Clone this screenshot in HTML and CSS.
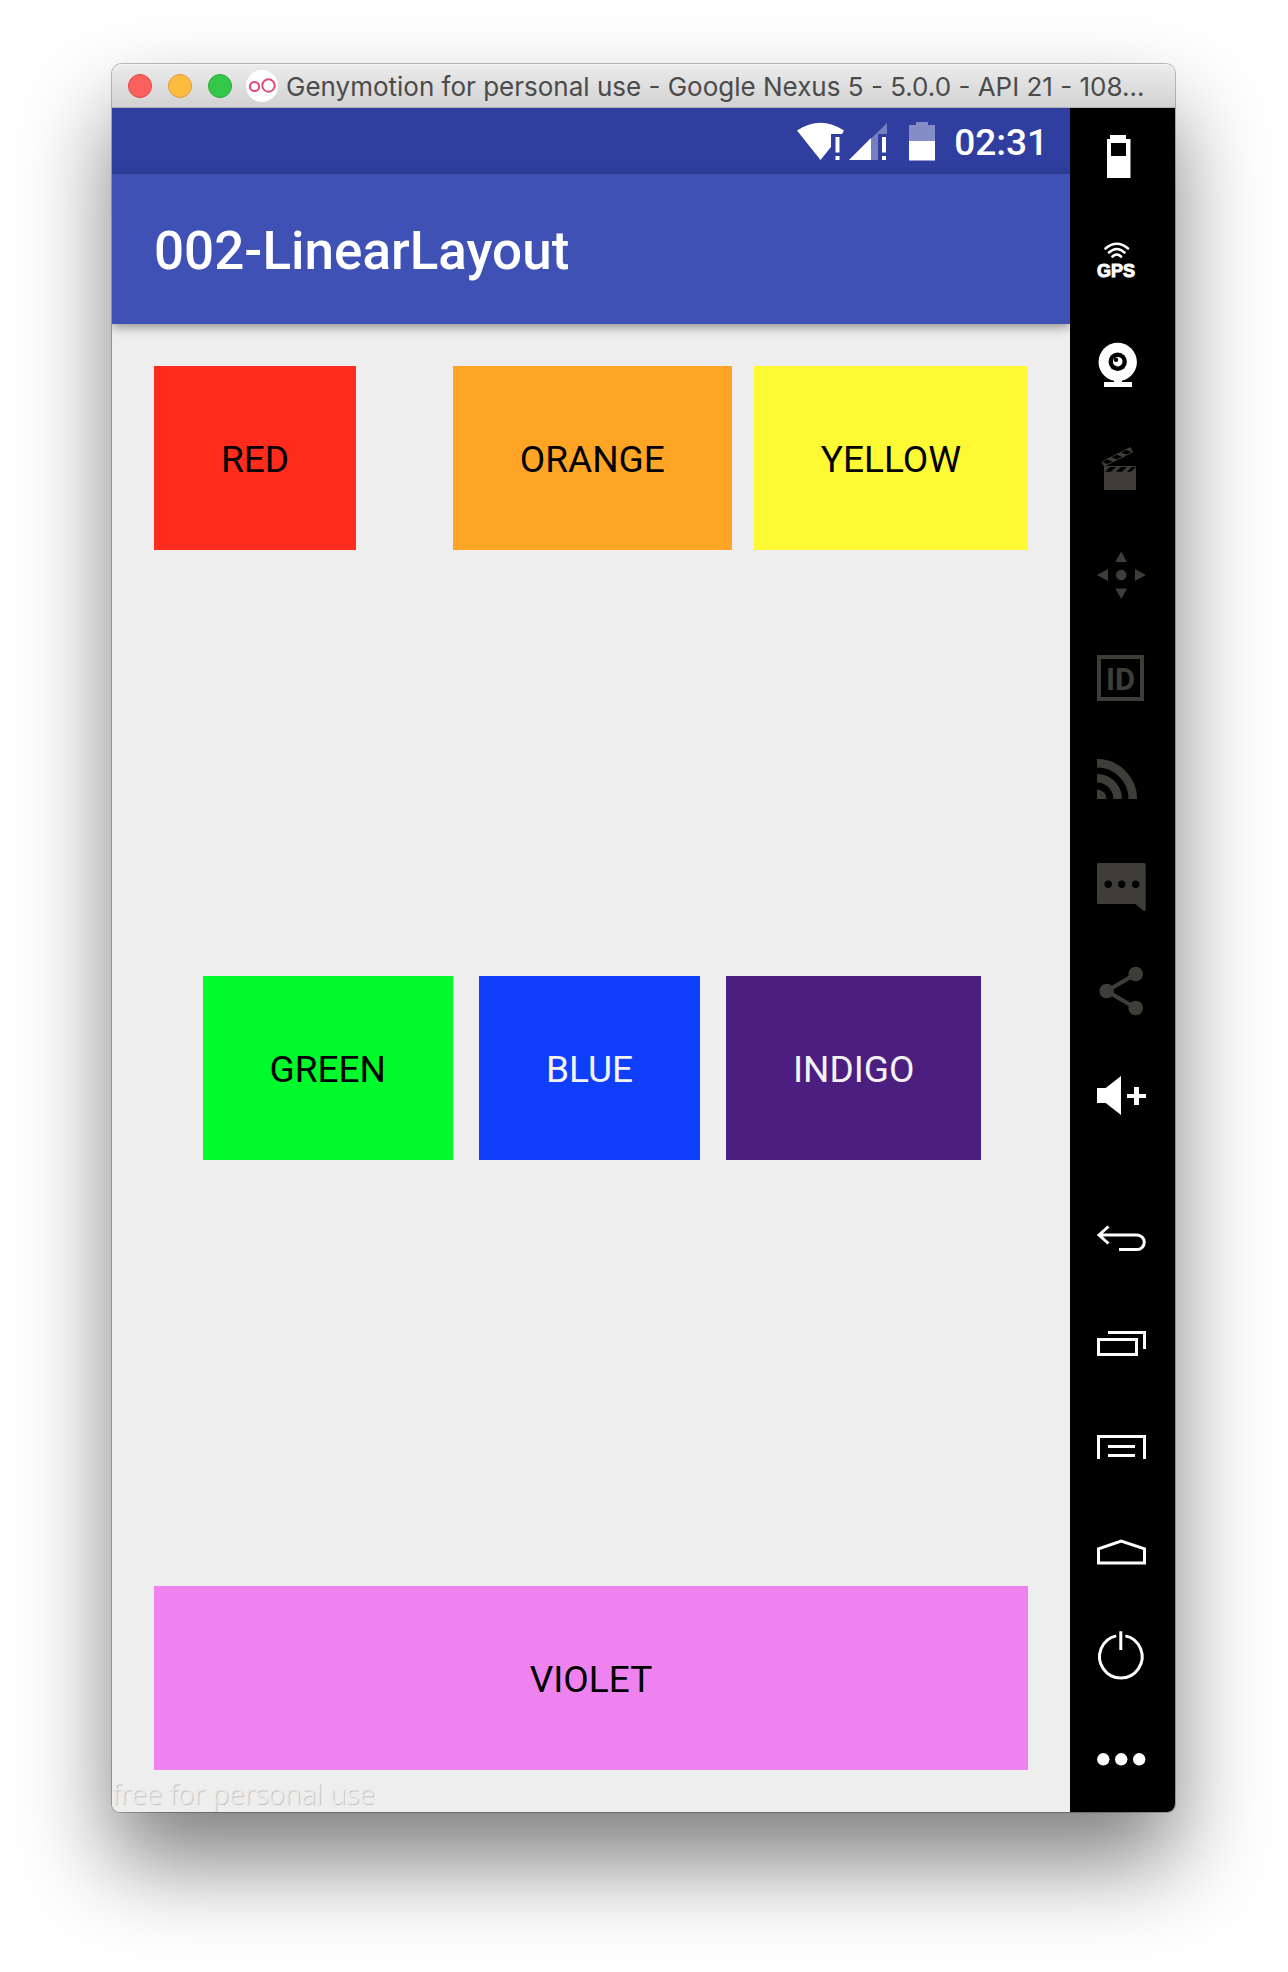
FILE: index.html
```html
<!DOCTYPE html>
<html lang="en">
<head>
<meta charset="utf-8">
<meta name="viewport" content="width=device-width, initial-scale=1">
<title>Genymotion - 002-LinearLayout</title>
<link rel="stylesheet" href="styles.css">
</head>
<body>
<div class="window">
  <header class="titlebar">
    <div class="lights">
      <button class="light close" type="button" aria-label="Close"></button>
      <button class="light minimize" type="button" aria-label="Minimize"></button>
      <button class="light zoom" type="button" aria-label="Zoom"></button>
    </div>
    <svg class="logo" viewBox="0 0 32 32" aria-hidden="true">
      <circle cx="16" cy="16" r="16" fill="#fff"/>
      <g fill="none" stroke="#e8447e" stroke-width="2"><circle cx="8.500" cy="16.500" r="4.600"/><circle cx="22.500" cy="15.500" r="6.200"/></g>
    </svg>
    <span class="window-title">Genymotion for personal use - Google Nexus 5 - 5.0.0 - API 21 - 108...</span>
  </header>
  <div class="emulator">
    <main class="screen">
      <div class="statusbar">
        <svg class="status-icons" viewBox="0 0 140 40" aria-hidden="true">
          <path fill="#fff" d="M1 9.500Q24.500-6 48 9.500L46 13H35V26L24.500 39Z"/>
          <path fill="#fff" d="M39.500 16h4v15.500h-4zM39.500 35h4v4h-4z"/>
          <path fill="#7580bf" d="M91 2V13H82V39H53Z"/>
          <path fill="#fff" d="M75 17V39H53ZM86 16h4v15.500h-4zM86 35h4v4h-4z"/>
          <path fill="#858dc6" d="M113 4h7V1h12v3h7v16h-26z"/>
          <path fill="#fff" d="M113 20h26v19.500h-26z"/>
        </svg>
        <time class="clock">02:31</time>
      </div>
      <div class="appbar"><h1 class="app-title">002-LinearLayout</h1></div>
      <div class="content">
        <div class="row row-top">
          <div class="tile red">RED</div>
          <div class="tile orange">ORANGE</div>
          <div class="tile yellow">YELLOW</div>
        </div>
        <div class="row row-middle">
          <div class="tile green">GREEN</div>
          <div class="tile blue">BLUE</div>
          <div class="tile indigo">INDIGO</div>
        </div>
        <div class="tile violet">VIOLET</div>
      </div>
      <span class="watermark">free for personal use</span>
    </main>
    <nav class="toolbar" aria-label="Device controls">
      <div class="tools">
        <button class="tool" type="button" aria-label="Battery"><svg viewBox="0 0 105 104"><path fill="currentColor" fill-rule="evenodd" d="M37 31h3v-4h16v4h4.500v39H37zM41 35v13h15V35z"/></svg></button>
        <button class="tool" type="button" aria-label="GPS"><svg viewBox="0 0 105 104"><g fill="none" stroke="currentColor" stroke-width="2.600" stroke-linecap="round"><path d="M35.500 36.500Q46.800 27 58 36.500M39 40.500Q46.800 33.500 54.500 40.500M42.500 44.500Q46.800 40.500 51 44.500"/></g><text class="gps" x="27" y="65">GPS</text></svg></button>
        <button class="tool" type="button" aria-label="Camera"><svg viewBox="0 0 105 104"><circle cx="47.700" cy="46" r="19.200" fill="currentColor"/><path fill="currentColor" d="M44 63h8v3h10v5H34v-5h10z"/><circle cx="47.700" cy="45.700" r="9.200" fill="#000"/><circle cx="47.700" cy="45.700" r="4.800" fill="currentColor"/><circle cx="46" cy="43.700" r="2.200" fill="#000"/></svg></button>
        <button class="tool off" type="button" aria-label="Screencast"><svg viewBox="0 0 105 104"><path fill="currentColor" d="M34 46h32v24H34zM31 41.700L60.300 27l3 5.200L34.300 46.500z"/><path fill="#000" d="M35 51.700l5-4.700h6l-5 4.700zM46 51.700l5-4.700h6l-5 4.700zM57 51.700l5-4.700h4l-5 4.700zM32 42l5-2.500 5.500 2-5 2.500zM41.500 37.200l5-2.500 5.500 2-5 2.500zM51 32.500l5-2.500 5.500 2-5 2.500z"/></svg></button>
        <button class="tool off" type="button" aria-label="Remote control"><svg viewBox="0 0 105 104"><g fill="currentColor"><circle cx="51.200" cy="51" r="5.300"/><path d="M51.200 27.500L57 38H45.300zM51.200 75L57 64.500H45.300zM27 51l11-6v12zM76 51l-11-6v12z"/></g></svg></button>
        <button class="tool off" type="button" aria-label="Identifiers"><svg viewBox="0 0 105 104"><rect x="29" y="29" width="43" height="42" fill="none" stroke="currentColor" stroke-width="4"/><text class="id" x="36" y="62">ID</text></svg></button>
        <button class="tool off" type="button" aria-label="Network"><svg viewBox="0 0 105 104"><path fill="currentColor" d="M27 57.500A9.700 9.700 0 0 1 36.700 67H27z"/><path fill="none" stroke="currentColor" stroke-width="8.600" d="M27 46.300A20.700 20.700 0 0 1 47.700 67M27 31.200A35.800 35.800 0 0 1 62.800 67"/></svg></button>
        <button class="tool off" type="button" aria-label="Phone"><svg viewBox="0 0 105 104"><path fill="currentColor" d="M28.500 27H74a1.700 1.700 0 0 1 1.700 1.700V74.700H73.500L65.300 68H28.500A1.500 1.500 0 0 1 27 66.500V28.500A1.500 1.500 0 0 1 28.500 27z"/><g fill="#000"><circle cx="38.300" cy="48.300" r="3.700"/><circle cx="51.700" cy="48.300" r="3.700"/><circle cx="65.700" cy="48.300" r="3.700"/></g></svg></button>
        <button class="tool off" type="button" aria-label="Share"><svg viewBox="0 0 105 104"><path fill="none" stroke="currentColor" stroke-width="4" d="M65.700 34L36.700 51l29 17"/><g fill="currentColor"><circle cx="65.700" cy="34" r="7.300"/><circle cx="36.700" cy="51" r="7.300"/><circle cx="65.700" cy="68" r="7.300"/></g></svg></button>
        <button class="tool" type="button" aria-label="Volume up"><svg viewBox="0 0 105 104"><path fill="currentColor" d="M27 44h8.700L51 32v39L35.700 59H27zM57 50h7v-7h5v7h7v4h-7v7h-5v-7h-7z"/></svg></button>
      </div>
      <div class="tools">
        <button class="tool" type="button" aria-label="Back"><svg viewBox="0 0 105 104"><path fill="none" stroke="currentColor" stroke-width="3" d="M28.500 47H67a7.300 7.300 0 0 1 0 14.600H49M38.500 38.500L29 47l9.500 8.500"/></svg></button>
        <button class="tool" type="button" aria-label="Recent apps"><svg viewBox="0 0 105 104"><path fill="none" stroke="currentColor" stroke-width="3" d="M28.500 47.500H66.500v15H28.500zM38 40.500H74.500V57"/></svg></button>
        <button class="tool" type="button" aria-label="Menu"><svg viewBox="0 0 105 104"><path fill="none" stroke="currentColor" stroke-width="3" d="M28.500 63V40.500H74.500V63M38 50.500H65M38 59.500H65"/></svg></button>
        <button class="tool" type="button" aria-label="Home"><svg viewBox="0 0 105 104"><path fill="none" stroke="currentColor" stroke-width="3" d="M28.500 63V48.800L51.200 41l23.300 7.800V63z"/></svg></button>
        <button class="tool" type="button" aria-label="Power"><svg viewBox="0 0 105 104"><path fill="none" stroke="currentColor" stroke-width="3" d="M46.300 31.900A21.300 21.300 0 1 0 55.400 31.900M50.800 27.300V46"/></svg></button>
        <button class="tool" type="button" aria-label="More"><svg viewBox="0 0 105 104"><g fill="currentColor"><circle cx="33.300" cy="51.300" r="6.200"/><circle cx="51.200" cy="51.300" r="6.200"/><circle cx="69.200" cy="51.300" r="6.200"/></g></svg></button>
      </div>
    </nav>
  </div>
</div>
</body>
</html>
```
FILE: styles.css
```css
* {
  box-sizing: border-box;
}

body {
  margin: 0;
  min-height: 100vh;
  padding: 64px 113px 160px 112px;
  display: flex;
  background: #fff;
  font-family: Roboto, "Liberation Sans", sans-serif;
}

button {
  border: 0;
  padding: 0;
  background: none;
  cursor: pointer;
}

.window {
  flex: 1;
  min-width: 0;
  display: flex;
  flex-direction: column;
  border-radius: 10px 10px 8px 8px;
  box-shadow: 0 0 0 1px rgba(0, 0, 0, 0.25), 0 50px 90px rgba(0, 0, 0, 0.5);
}

.titlebar {
  height: 44px;
  padding: 0 16px;
  display: flex;
  align-items: center;
  border-radius: 10px 10px 0 0;
  border-bottom: 1px solid #b5b5b5;
  background: linear-gradient(#ececec, #d2d2d2);
  box-shadow: inset 0 1px 0 #f6f6f6;
}

.lights {
  display: flex;
  gap: 16px;
}

.light {
  width: 24px;
  height: 24px;
  border-radius: 50%;
  border: 1px solid;
}

.close { background: #fc605c; border-color: #df4744; }
.minimize { background: #fdbc40; border-color: #de9f34; }
.zoom { background: #34c84a; border-color: #27aa35; }

.logo {
  width: 32px;
  height: 32px;
  flex: none;
  margin: 0 8px 0 14px;
}

.window-title {
  flex: 1;
  min-width: 0;
  padding-top: 2px;
  white-space: nowrap;
  font: 26px/36px Inter, "Liberation Sans", sans-serif;
  color: #4b4b4b;
}

.emulator {
  flex: 1;
  display: flex;
  border-radius: 0 0 8px 8px;
  overflow: hidden;
}

.screen {
  position: relative;
  flex: 1;
  min-width: 0;
  display: flex;
  flex-direction: column;
  background: #eee;
}

.statusbar {
  height: 66px;
  padding-right: 22px;
  display: flex;
  align-items: center;
  justify-content: flex-end;
  gap: 18px;
  background: #303f9f;
}

.status-icons {
  width: 140px;
  height: 40px;
}

.clock {
  padding-top: 4px;
  font-size: 37px;
  line-height: 44px;
  font-weight: 500;
  color: #fff;
}

.appbar {
  height: 150px;
  padding: 4px 42px 0;
  display: flex;
  align-items: center;
  background: #3f51b5;
  box-shadow: 0 3px 10px rgba(0, 0, 0, 0.4);
}

.app-title {
  margin: 0;
  font-size: 53px;
  line-height: 64px;
  font-weight: 500;
  color: #fff;
}

.content {
  flex: 1;
  padding: 42px;
  display: flex;
  flex-direction: column;
  justify-content: space-between;
}

.row {
  display: flex;
}

.row-top {
  gap: 22px;
}

.row-middle {
  justify-content: center;
  gap: 26px;
  padding-left: 2px;
}

.tile {
  padding: 68px 67px 64px;
  font-size: 37px;
  line-height: 52px;
  text-align: center;
  color: #000;
}

.red { background: #ff2b1c; margin-right: auto; }
.orange { background: #ffa526; }
.yellow { background: #fef935; }
.green { background: #00fb2c; }
.blue { background: #103ffb; color: #f3f3f3; }
.indigo { background: #4b1e7f; color: #f3f3f3; }
.violet { background: #ee82ee; }

.watermark {
  position: absolute;
  left: 0;
  bottom: 1px;
  font: 300 28px/36px "Open Sans", sans-serif;
  color: #ededed;
  text-shadow: 1px 1px 1px #bbb;
}

.toolbar {
  width: 105px;
  display: flex;
  flex-direction: column;
  justify-content: space-between;
  background: #000;
}

.tools {
  display: flex;
  flex-direction: column;
}

.tool {
  height: 104px;
  color: #fff;
}

.tool svg {
  display: block;
  width: 105px;
  height: 104px;
}

.off {
  color: #3e3d38;
}

.gps {
  font: bold 18px "Liberation Sans", sans-serif;
  fill: currentColor;
  stroke: currentColor;
}

.id {
  font: bold 31px Roboto, sans-serif;
  fill: currentColor;
}
```
